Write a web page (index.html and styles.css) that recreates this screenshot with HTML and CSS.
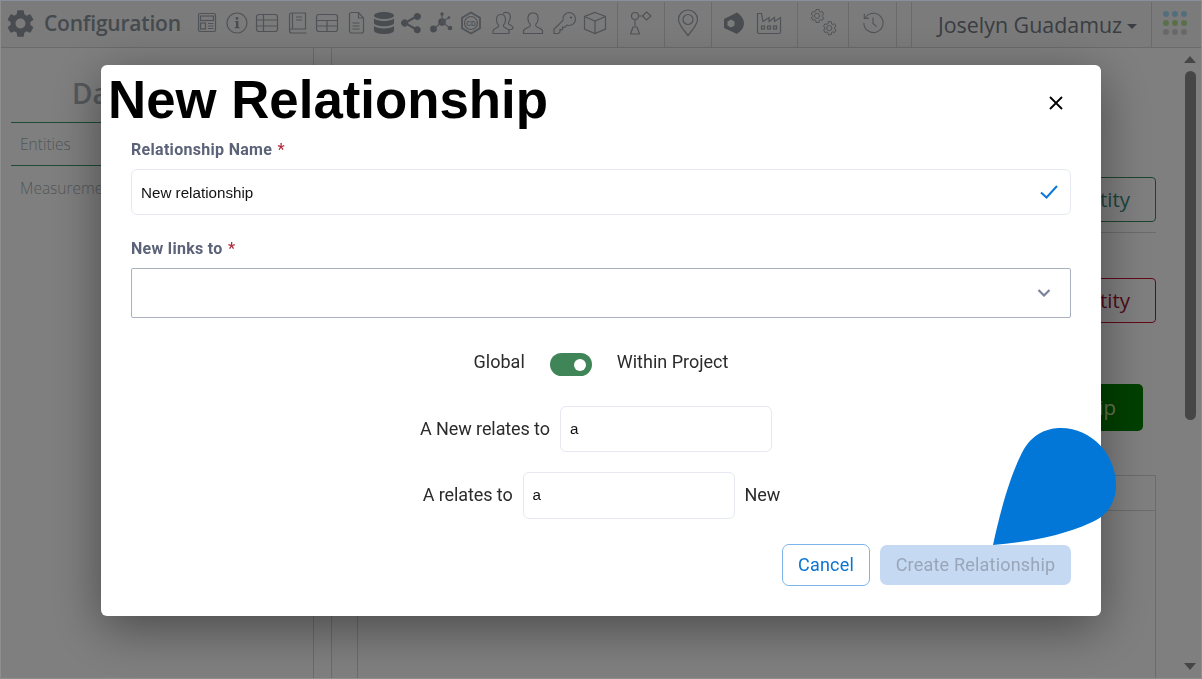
FILE: index.html
```html
<!DOCTYPE html>
<html lang="en">
<head>
<meta charset="utf-8">
<title>New Relationship</title>
<link rel="stylesheet" href="styles.css">
</head>
<body>
<div class="page">
  <header class="toolbar">
    <div class="tb-cell tb-main">
      <svg class="gear" viewBox="0 0 24 24"><path class="solid" d="M19.14 12.94c.04-.3.06-.61.06-.94 0-.32-.02-.64-.07-.94l2.03-1.58c.18-.14.23-.41.12-.61l-1.92-3.32c-.12-.22-.37-.29-.59-.22l-2.39.96c-.5-.38-1.03-.7-1.62-.94l-.36-2.54c-.04-.24-.24-.41-.48-.41h-3.84c-.24 0-.43.17-.47.41l-.36 2.54c-.59.24-1.13.57-1.62.94l-2.39-.96c-.22-.08-.47 0-.59.22L2.74 8.87c-.12.21-.08.47.12.61l2.03 1.58c-.05.3-.09.63-.09.94s.02.64.07.94l-2.03 1.58c-.18.14-.23.41-.12.61l1.92 3.32c.12.22.37.29.59.22l2.39-.96c.5.38 1.03.7 1.62.94l.36 2.54c.05.24.24.41.48.41h3.84c.24 0 .44-.17.47-.41l.36-2.54c.59-.24 1.13-.56 1.62-.94l2.39.96c.22.08.47 0 .59-.22l1.92-3.32c.12-.22.07-.47-.12-.61l-2.01-1.58zM12 15.6c-1.98 0-3.6-1.62-3.6-3.6s1.62-3.6 3.6-3.6 3.6 1.62 3.6 3.6-1.62 3.6-3.6 3.6z"/></svg>
      <span class="app-title">Configuration</span>
      <svg class="ic" viewBox="0 0 30 24"><g class="line"><rect x="6.5" y="2.5" width="17" height="18" rx="1.5"/><rect x="8.5" y="5" width="13" height="4.5"/><rect x="8.5" y="12" width="5" height="6"/><path d="M16 12.5h5.5M16 15h5.5M16 17.5h5.5"/></g></svg>
      <svg class="ic" viewBox="0 0 30 24"><g class="line"><circle cx="15" cy="12" r="10"/></g><path class="solid" d="M13.2 10h3.2v6h1.1v1.2h-4.6V16h1.1v-4.8h-.8zM15 6a1.4 1.4 0 1 1 0 2.8A1.4 1.4 0 0 1 15 6z"/></svg>
      <svg class="ic" viewBox="0 0 30 24"><g class="line"><rect x="4.5" y="3.5" width="21" height="17" rx="2.5"/><path d="M4.5 9h21M4.5 15h21M11.500 3.500v17"/></g></svg>
      <svg class="ic" viewBox="0 0 30 24"><g class="line"><path d="M7.500 19V4a2 2 0 0 1 2-2h14v16H9.500a2 2 0 0 0 0 4h15M10.500 2v16M14 6h6M14 9h6"/></g></svg>
      <svg class="ic" viewBox="0 0 30 24"><g class="line"><rect x="4.500" y="3.500" width="21" height="17" rx="2.500"/><path d="M4.500 9.500h21M4.500 15h21M15 9.500v11"/></g></svg>
      <svg class="ic ic-n" viewBox="0 0 28 24"><g class="line"><path d="M7.500 3.500A2 2 0 0 1 9.500 1.500h7l5 5.500v13a2 2 0 0 1-2 2h-10a2 2 0 0 1-2-2zM16.500 1.500V7h5M10.500 12h7M10.500 15h7M10.500 18h7"/></g></svg>
      <svg class="ic ic-n" viewBox="0 0 28 24"><path class="solid" d="M4 4.500C4 2.500 9 1 14 1s10 1.500 10 3.500S19 8 14 8 4 6.500 4 4.500zM4 7.500C5.500 9 9.500 10 14 10s8.500-1 10-2.500V12c0 1.800-4.500 3.200-10 3.200S4 13.800 4 12zM4 15c1.500 1.500 5.500 2.500 10 2.500s8.500-1 10-2.500v4.500C24 21.500 19.500 23 14 23S4 21.500 4 19.500z"/></svg>
      <svg class="ic ic-n" viewBox="0 0 28 24"><path class="solid" d="M19.500 2a3.500 3.500 0 1 1-2.700 5.700l-6.500 3.500a3.500 3.500 0 0 1 0 1.600l6.500 3.500a3.500 3.500 0 1 1-1 1.900l-6.600-3.600a3.600 3.600 0 1 1 0-5.200l6.600-3.600A3.500 3.500 0 0 1 19.500 2z"/></svg>
      <svg class="ic" viewBox="0 0 30 24"><circle class="solid" cx="16" cy="11" r="3.800"/><circle class="solid" cx="7.500" cy="18" r="3.400"/><circle class="solid" cx="24" cy="17" r="2.300"/><circle class="solid" cx="16" cy="3" r="1.700"/><circle class="solid" cx="23" cy="6.500" r="1.300"/><g class="line"><path d="M16 3v8M16 11l8 6M16 11l-8.500 7M16 11l7-4.500"/></g></svg>
      <svg class="ic" viewBox="0 0 30 24"><g class="line thick"><path d="M15 1.500l9 5.200v10.600l-9 5.200-9-5.200V6.700z"/></g><circle class="line" cx="15" cy="12" r="6.500"/><text class="cd" x="15" y="14.500">CD</text></svg>
      <svg class="ic ic-w" viewBox="0 0 32 24"><g class="line"><path d="M7 22.500v-2.500c0-2.500 4.500-3 5.500-4.500v-1.500c-1.200-1-2-3-2-5.500 0-3 1.800-5 4.500-5s4.500 2 4.500 5c0 2.500-.8 4.500-2 5.500v1.500c1 1.500 5.500 2 5.500 4.500v2.500zM17 2.500c.8-.8 1.800-1.200 3-1.200 2.700 0 4.300 2 4.300 4.700 0 2.300-.7 4.200-1.800 5.100v1.600c.8 1.300 4 1.700 4.500 3.800.2 1-.8 2-2 2h-2"/></g></svg>
      <svg class="ic" viewBox="0 0 30 24"><g class="line"><path d="M5.500 22.500V20c0-2.800 5.500-3.200 6.700-5v-1.800c-1.400-1.200-2.300-3.200-2.300-5.700 0-3.500 2-5.700 5.100-5.700s5.100 2.200 5.100 5.700c0 2.500-.9 4.500-2.300 5.700V15c1.200 1.800 6.700 2.200 6.700 5v2.500z"/></g></svg>
      <svg class="ic ic-w" viewBox="0 0 32 24"><g class="line"><path d="M21 1.500a6.500 6.500 0 0 1 0 13c-.8 0-1.500-.1-2.200-.4l-1.800 2h-2.500v2.500H12v2.500l-1.500 1.400H6v-4.200l9-9a6.500 6.500 0 0 1 6-7.800z"/></g><circle class="solid" cx="23" cy="6.500" r="1.100"/></svg>
      <svg class="ic" viewBox="0 0 30 24"><g class="line"><path d="M15 1.500l10.500 4v12.500L15 22.500 4.500 18V5.500zM4.500 5.500L15 10l10.500-4.500M15 10v12.500"/></g></svg>
    </div>
    <div class="tb-cell tb-w47 tb-flow">
      <svg class="ic ic-f" viewBox="0 0 22 24"><g class="line"><circle cx="5" cy="5" r="3.500"/><path d="M8.500 5h5M16.500 1l4.500 4-4.500 4-4-4zM5 8.500V15M3 16h4l2.500 7h-9z"/></g></svg>
    </div>
    <div class="tb-cell tb-w47">
      <svg class="ic ic-pin" viewBox="0 0 22 28"><g class="line"><path d="M11 26.500C6 20.500 1.500 15.500 1.500 10.500a9.500 9.500 0 0 1 19 0c0 5-4.500 10-9.500 16z"/><circle cx="11" cy="10.500" r="5"/></g></svg>
    </div>
    <div class="tb-cell tb-w86">
      <svg class="ic ic-f" viewBox="0 0 22 24"><path class="solid" fill-rule="evenodd" d="M1 8L14 1.500C18 4 21 8 21 12.500S18 20 14 23L1 17ZM8 8.500L4.500 10.500V14.500L8 16.500L11.500 14.500V10.500Z"/></svg>
      <svg class="ic ic-fac" viewBox="0 0 26 24"><g class="line"><path d="M1.500 21V2.500h4l1.500 8 6-4v4l5.500-4v4l6-4V21a1.500 1.500 0 0 1-1.500 1.500H3A1.500 1.500 0 0 1 1.500 21z"/><rect x="5.500" y="15" width="3" height="3"/><rect x="11.500" y="15" width="3" height="3"/><rect x="17.500" y="15" width="3" height="3"/></g></svg>
    </div>
    <div class="tb-cell tb-w51">
      <svg class="ic ic-gears" viewBox="0 0 24 24"><g class="line thin"><path transform="translate(-.5 -1.500) scale(.62)" d="M19.140 12.940c.04-.3.06-.61.06-.94 0-.32-.02-.64-.07-.94l2.030-1.580-2.100-3.600-2.390.96c-.5-.38-1.030-.7-1.620-.94l-.36-2.900h-4.200l-.36 2.900c-.59.24-1.130.57-1.620.94l-2.390-.96-2.100 3.600 2.030 1.580c-.05.3-.09.63-.09.94s.02.64.07.94l-2.030 1.580 2.100 3.600 2.390-.96c.5.38 1.030.7 1.620.94l.36 2.900h4.200l.36-2.900c.59-.24 1.130-.56 1.620-.94l2.390.96 2.100-3.600z"/><circle cx="6.900" cy="5.900" r="2.200"/><path transform="translate(10 9) scale(.62)" d="M19.140 12.940c.04-.3.06-.61.06-.94 0-.32-.02-.64-.07-.94l2.030-1.580-2.100-3.600-2.390.96c-.5-.38-1.030-.7-1.620-.94l-.36-2.900h-4.200l-.36 2.900c-.59.24-1.130.57-1.620.94l-2.390-.96-2.100 3.600 2.030 1.580c-.05.3-.09.63-.09.94s.02.64.07.94l-2.030 1.580 2.100 3.600 2.390-.96c.5.38 1.030.7 1.620.94l.36 2.900h4.200l.36-2.900c.59-.24 1.130-.56 1.620-.94l2.390.96 2.100-3.600z"/><circle cx="17.400" cy="16.400" r="2.200"/></g></svg>
    </div>
    <div class="tb-cell tb-w48">
      <svg class="ic ic-f" viewBox="0 0 24 24"><g class="line"><path d="M3.500 6.500A10.500 10.500 0 1 1 2 12M2.500 2v5h5M12 6v6.500l4 3.500"/></g></svg>
    </div>
    <div class="tb-cell tb-w15"></div>
    <div class="tb-cell tb-user">
      <span class="user-name">Joselyn Guadamuz</span><span class="caret"></span>
    </div>
    <div class="tb-cell tb-apps">
      <svg class="apps" viewBox="0 0 24 24"><g class="d1"><circle cx="3" cy="3" r="3"/><circle cx="12" cy="3" r="3"/><circle cx="21" cy="3" r="3"/></g><g class="d2"><circle cx="3" cy="12" r="3"/><circle cx="12" cy="12" r="3"/><circle cx="21" cy="12" r="3"/></g><g class="d3"><circle cx="3" cy="21" r="3"/><circle cx="12" cy="21" r="3"/><circle cx="21" cy="21" r="3"/></g></svg>
    </div>
  </header>
  <div class="workspace">
    <aside class="sidebar">
      <h2 class="side-title">Data Model</h2>
      <div class="side-tab active">Entities</div>
      <div class="side-tab">Measurements</div>
      <div class="side-foot">FACTOR</div>
    </aside>
    <div class="gutter"></div>
    <main class="content">
      <div class="action-row"><button class="bg-btn outline-green">Create Entity</button></div>
      <div class="action-row second"><button class="bg-btn outline-red">Delete Entity</button></div>
      <div class="action-row third"><button class="bg-btn fill-green">Create Relationship</button></div>
      <div class="bg-table"><div class="bg-table-head"></div></div>
    </main>
    <div class="scrollbar">
      <span class="sb-up"></span>
      <span class="sb-thumb"></span>
      <span class="sb-down"></span>
    </div>
  </div>
</div>

<div class="overlay">
  <section class="modal">
    <div class="modal-head">
      <h1 class="modal-title">New Relationship</h1>
      <svg class="close" viewBox="0 0 14 14"><path d="M1 1l12 12M13 1L1 13"/></svg>
    </div>
    <div class="modal-body">
      <label class="field-label">Relationship Name <span class="req">*</span></label>
      <div class="input name-input"><span>New relationship</span>
        <svg class="check" viewBox="0 0 18 14"><path d="M1 7.500l5.500 5L17 1"/></svg>
      </div>
      <label class="field-label second-label">New links to <span class="req">*</span></label>
      <div class="select">
        <svg class="chev" viewBox="0 0 14 8"><path d="M1.500 1l5.500 5.500L12.500 1"/></svg>
      </div>
      <div class="scope-row">
        <span class="scope-label">Global</span>
        <span class="toggle"><span class="knob"></span></span>
        <span class="scope-label">Within Project</span>
      </div>
      <div class="rel-row first-rel">
        <span class="rel-text">A New relates to</span>
        <div class="input rel-input">a</div>
        <span class="rel-pad"></span>
      </div>
      <div class="rel-row second-rel">
        <span class="rel-text">A relates to</span>
        <div class="input rel-input">a</div>
        <span class="rel-text">New</span>
      </div>
      <div class="modal-actions">
        <button class="btn btn-cancel">Cancel</button>
        <button class="btn btn-create">Create Relationship</button>
      </div>
    </div>
  </section>
  <svg class="drop" viewBox="0 0 126 120"><path d="M1 118C11 72 21 42 32 22 42 6 56 1 69 1 100 1 124 28 124 58 124 78 113 90 98 96 72 108 38 115 1 118Z"/></svg>
</div>
</body>
</html>
```
FILE: styles.css
```css
* { box-sizing: border-box; }
html, body { margin: 0; height: 100%; }
body {
  overflow: hidden;
  background: #fff;
  font-family: Roboto, "Liberation Sans", sans-serif;
}
body::after {
  content: "";
  position: fixed;
  inset: 0;
  border: 1px solid #8e8e8e;
  border-top-color: #87919e;
  pointer-events: none;
  z-index: 30;
}
.page { height: 100vh; display: flex; flex-direction: column; overflow: hidden; }

/* toolbar */
.toolbar {
  flex: 0 0 48px;
  display: flex;
  background: #f6f6f6;
  border-bottom: 1px solid #d6d6d6;
  padding-top: 2px;
}
.tb-cell {
  display: flex;
  align-items: center;
  justify-content: center;
  border-right: 1px solid #d6d6d6;
  height: 45px;
  padding-bottom: 3px;
}
.tb-main { width: 618px; justify-content: flex-start; padding-left: 4px; }
.tb-w47 { width: 47px; }
.tb-w86 { width: 86px; gap: 11px; padding-right: 5px; }
.tb-w51 { width: 51px; }
.tb-w48 { width: 48px; }
.tb-w15 { width: 15px; }
.tb-flow { justify-content: flex-start; padding-left: 12px; }
.tb-user { width: 240px; justify-content: flex-start; padding: 0 0 0 26px; }
.tb-apps { flex: 1; border-right: 0; padding-right: 4px; }
.gear { width: 33px; height: 33px; flex: none; }
.app-title {
  font: 600 21px "Open Sans", sans-serif;
  color: #8a949e;
  margin: 0 11px 0 7px;
  width: 137px;
  white-space: nowrap;
  letter-spacing: -.2px;
}
.ic { width: 30px; height: 24px; flex: none; }
.ic-n { width: 28px; }
.ic-w { width: 32px; }
.ic-f { width: 22px; height: 24px; }
.ic-pin { width: 22px; height: 28px; }
.ic-fac { width: 26px; height: 24px; }
.ic-gears { width: 28px; height: 28px; }
.solid { fill: #929aa2; }
.line { fill: none; stroke: #a0a6ae; stroke-width: 1.2; }
.line.thick { stroke-width: 1.800; }
.line.thin { stroke-width: .8; }
.line.thin path { vector-effect: non-scaling-stroke; stroke-width: 1; }
.cd { font: 700 6.500px "Liberation Sans", sans-serif; fill: #a0a6ae; text-anchor: middle; }
.user-name { font: 500 21.400px "Open Sans", sans-serif; color: #747a84; white-space: nowrap; }
.caret {
  margin-left: 5px;
  margin-top: 3px;
  border: 5px solid transparent;
  border-top-color: #767c86;
  border-bottom: 0;
}
.apps { width: 24px; height: 24px; }
.d1 { fill: #a4dcf5; }
.d2 { fill: #b4e094; }
.d3 { fill: #d0d0d0; }

/* background */
.workspace { flex: 1; display: flex; min-height: 0; padding-left: 1px; overflow: hidden; }
.sidebar {
  width: 313px;
  border-right: 1px solid #d6d6d6;
  padding: 0 0 0 10px;
  overflow: hidden;
}
.side-title {
  margin: 26px 0 0 61px;
  font: 600 28px/38px "Open Sans", sans-serif;
  color: #aab0b8;
  white-space: nowrap;
}
.side-tab {
  width: 290px;
  height: 42px;
  padding-left: 9px;
  font: 300 15.500px/42px "Open Sans", sans-serif;
  color: #a4b0b4;
}
.side-tab.active { margin-top: 10px; border: solid #3a9a68; border-width: 1px 0; height: 44px; }
.side-tab + .side-tab { margin-top: 1px; }
.side-foot {
  margin: 464px 0 0 169px;
  font: 700 16px "Open Sans", sans-serif;
  color: #555;
}
.gutter { width: 18px; border-right: 1px solid #d6d6d6; }
.content { flex: 1; min-width: 0; padding: 129px 22px 0 25px; }
.action-row { display: flex; justify-content: flex-end; padding-bottom: 10px; border-bottom: 1px solid #d6d6d6; }
.action-row.second { margin-top: 45px; border-bottom: 0; padding-bottom: 0; }
.action-row.third { margin-top: 61px; border-bottom: 0; padding: 0 13px 0 0; }
.bg-btn {
  height: 45px;
  width: 200px;
  border-radius: 4px;
  font: 400 20.500px "Open Sans", sans-serif;
  background: transparent;
  padding: 0 25px 2px 0;
  text-align: right;
  white-space: nowrap;
}
.outline-green { border: 1px solid #3a8a5a; color: #3a8a7a; }
.outline-red { border: 1px solid #c4122f; color: #a0142f; }
.fill-green { width: 260px; height: 47px; border: 0; border-radius: 5px; background: #008000; color: #d0e4a8; padding-right: 27px; }
.bg-table {
  margin-top: 44px;
  height: 300px;
  border: 1px solid #d6d6d6;
}
.bg-table-head { height: 35px; border-bottom: 1px solid #d6d6d6; }
.scrollbar {
  width: 24px;
  display: flex;
  flex-direction: column;
  align-items: center;
  padding-top: 8px;
}
.sb-up { border: 6.500px solid transparent; border-top: 0; border-bottom: 7px solid #8c8c8c; }
.sb-thumb { width: 11px; height: 349px; margin-top: 8px; border-radius: 6px; background: #8c8c8c; }
.sb-down { margin-top: auto; margin-bottom: 9px; border: 6.500px solid transparent; border-bottom: 0; border-top: 7px solid #8c8c8c; }

/* modal */
.overlay {
  position: fixed;
  inset: 0;
  padding-top: 65px;
  display: flex;
  justify-content: center;
  align-items: flex-start;
  background: rgba(0, 0, 0, .5);
  z-index: 10;
}
.modal {
  width: 1000px;
  height: 551px;
  background: #fff;
  border-radius: 6px;
  box-shadow: 0 12px 50px rgba(0, 0, 0, .42);
}
.modal-head {
  display: flex;
  justify-content: space-between;
  align-items: flex-start;
  padding: 7px 38px 0 7px;
  height: 75px;
}
.modal-title {
  margin: 0;
  font: 700 52.800px/55px "Liberation Sans", Arial, sans-serif;
  color: #000;
}
.close { width: 14px; height: 14px; margin-top: 24px; fill: none; stroke: #000; stroke-width: 1.800; }
.modal-body { padding: 0 30px; }
.field-label {
  display: block;
  font-size: 16px;
  font-weight: 700;
  line-height: 19px;
  letter-spacing: .3px;
  color: #5c6379;
}
.second-label { margin-top: 24px; }
.req { color: #b02a3c; font-weight: 500; margin-left: 1px; }
.input {
  display: flex;
  align-items: center;
  background: #fff;
  border: 1px solid #e6e8f2;
  border-radius: 6px;
  font: 400 15.200px "Liberation Sans", Arial, sans-serif;
  color: #111;
  padding: 0 9px;
}
.name-input { height: 46px; margin-top: 10px; justify-content: space-between; padding-right: 12px; }
.check { width: 18px; height: 14px; fill: none; stroke: #0d78d8; stroke-width: 2; }
.select {
  height: 50px;
  margin-top: 10px;
  display: flex;
  align-items: center;
  justify-content: flex-end;
  padding-right: 19px;
  border: 1px solid #a8b1bd;
  border-radius: 2px;
}
.chev { width: 14px; height: 8px; fill: none; stroke: #7b8299; stroke-width: 2.200; }
.scope-row, .rel-row {
  display: flex;
  justify-content: center;
  align-items: center;
  font-size: 18px;
  color: #2b2b2b;
}
.scope-row { margin-top: 35px; height: 23px; gap: 25px; }
.scope-label { margin-bottom: 7px; }
.toggle {
  width: 42px;
  height: 23px;
  border-radius: 12px;
  background: #3f8558;
  display: flex;
  align-items: center;
  justify-content: flex-end;
  padding-right: 6px;
}
.knob { width: 12px; height: 12px; border-radius: 50%; background: #fff; }
.rel-row { gap: 10px; padding-left: 1px; }
.rel-text { margin-bottom: 2px; letter-spacing: -.1px; }
.rel-pad { width: 1px; }
.first-rel { margin-top: 30px; }
.second-rel { margin-top: 20px; }
.rel-input { width: 212px; height: 46px; padding-bottom: 2px; }
.second-rel .rel-input { height: 47px; }
.modal-actions { display: flex; justify-content: flex-end; align-items: center; gap: 10px; margin-top: 25px; }
.btn {
  height: 40px;
  border-radius: 7px;
  font: 400 18px Roboto, sans-serif;
  letter-spacing: .2px;
  padding: 0 12px 2px;
}
.btn-cancel { width: 88px; height: 42px; background: #fff; border: 1px solid #7db5ea; color: #0a74d2; }
.btn-create { width: 191px; background: #c5d9f2; border: 0; color: #9aa6b8; }
.drop {
  position: absolute;
  left: 992px;
  top: 427px;
  width: 126px;
  height: 120px;
  fill: #0277d8;
}
```
